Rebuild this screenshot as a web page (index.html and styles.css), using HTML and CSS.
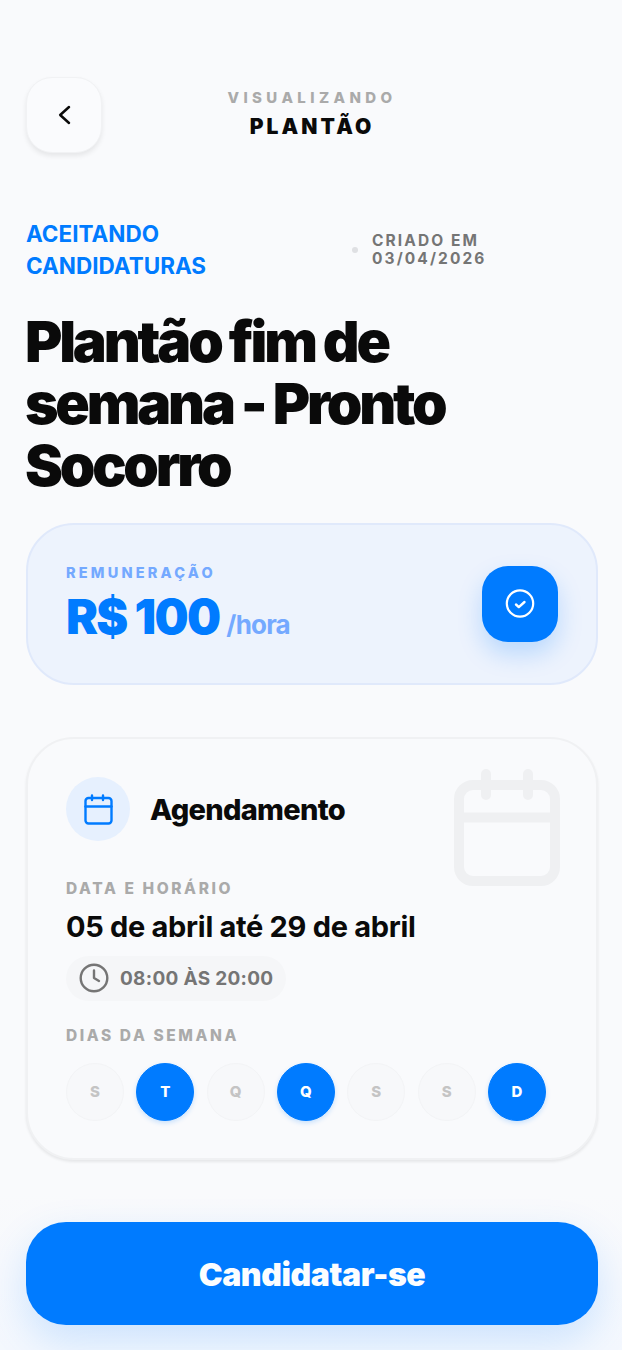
FILE: index.html
```html
<!DOCTYPE html>
<html lang="pt-BR">
<head>
<meta charset="utf-8">
<title>Plantão</title>
<link rel="stylesheet" href="styles.css">
</head>
<body>
<main class="page">
  <header class="topbar">
    <button class="back" aria-label="Voltar">
      <svg width="28" height="28" viewBox="0 0 28 28" fill="none" stroke="#0a0a0a" stroke-width="2.500" stroke-linecap="round" stroke-linejoin="round"><path d="M19 6 10.200 14 19 22"/></svg>
    </button>
    <div class="topbar-title">
      <div class="eyebrow">VISUALIZANDO</div>
      <div class="screen-name">PLANTÃO</div>
    </div>
  </header>

  <section class="status">
    <div class="status-label">ACEITANDO<br>CANDIDATURAS</div>
    <span class="dot"></span>
    <div class="created">CRIADO EM<br>03/04/2026</div>
  </section>

  <h1 class="headline">Plantão fim de semana - Pronto Socorro</h1>

  <section class="pay">
    <div>
      <div class="pay-label">REMUNERAÇÃO</div>
      <div class="pay-value"><span class="pay-amount">R$ 100</span><span class="pay-unit">/hora</span></div>
    </div>
    <div class="pay-badge">
      <svg width="32" height="32" viewBox="0 0 32 32" fill="none" stroke="#fff" stroke-linecap="round" stroke-linejoin="round"><circle cx="16" cy="15.500" r="13.200" stroke-width="2.200"/><path d="M12 16.500l2.800 2.600L20.500 14" stroke-width="2.400"/></svg>
    </div>
  </section>

  <section class="schedule">
    <svg class="watermark" width="120" height="120" viewBox="0 0 120 120" fill="none" stroke="#eff0f2" stroke-width="10" stroke-linecap="round" stroke-linejoin="round"><rect x="7" y="18" width="96" height="96" rx="14"/><path d="M7 50.500h96" stroke-linecap="butt"/><path d="M34 7v21M76 7v21"/></svg>
    <div class="schedule-head">
      <div class="schedule-icon">
        <svg width="32" height="32" viewBox="0 0 32 32" fill="none" stroke="#007bff" stroke-width="2.400" stroke-linecap="round" stroke-linejoin="round"><rect x="3.500" y="5" width="26" height="25.500" rx="3"/><path d="M3.500 13.500h26"/><path d="M10 2.500v4.500M21 2.500v4.500"/></svg>
      </div>
      <h2 class="schedule-title">Agendamento</h2>
    </div>
    <div class="field-label">DATA E HORÁRIO</div>
    <div class="dates">05 de abril até 29 de abril</div>
    <div class="time-pill">
      <svg width="30" height="30" viewBox="0 0 30 30" fill="none" stroke="#757575" stroke-width="2.400" stroke-linecap="round" stroke-linejoin="round"><circle cx="15" cy="15" r="13.300"/><path d="M15 7.500V15l5 3"/></svg>
      <span>08:00 ÀS 20:00</span>
    </div>
    <div class="field-label field-label-days">DIAS DA SEMANA</div>
    <div class="days">
      <span class="day">S</span>
      <span class="day day-on">T</span>
      <span class="day">Q</span>
      <span class="day day-on">Q</span>
      <span class="day">S</span>
      <span class="day">S</span>
      <span class="day day-on">D</span>
    </div>
  </section>
</main>
<footer class="cta-bar">
  <button class="cta">Candidatar-se</button>
</footer>
</body>
</html>
```
FILE: styles.css
```css
* { box-sizing: border-box; }
html, body { margin: 0; height: 1350px; overflow: hidden; }
body {
  background: #f9fafc;
  font-family: Inter, "Liberation Sans", sans-serif;
  color: #0a0a0a;
  position: relative;
}
.page { padding: 77px 24px 0 26px; }

.topbar { position: relative; display: flex; height: 76px; }
.back {
  width: 76px; height: 76px; padding: 0;
  border: 1px solid #f1f2f4; border-radius: 26px;
  background: #fafbfd;
  box-shadow: 0 3px 5px rgba(0,0,0,.08);
  display: flex; align-items: center; justify-content: center;
}
.topbar-title {
  position: absolute; left: 0; right: 0; top: 11px;
  text-align: center;
}
.eyebrow { font-size: 15px; line-height: 20px; font-weight: 800; letter-spacing: 4.400px; color: #aaaaaa; }
.screen-name { font-size: 21px; line-height: 38px; font-weight: 900; letter-spacing: 3.100px; }

.status { display: flex; align-items: center; margin-top: 65px; height: 64px; }
.status-label { width: 326px; font-size: 22.500px; line-height: 32px; font-weight: 700; color: #007bff; }
.dot { width: 6px; height: 6px; border-radius: 50%; background: #dfe0e3; margin: 0 14px 0 0; }
.created { font-size: 15.500px; line-height: 18px; font-weight: 700; letter-spacing: 2.100px; color: #757575; }

.headline {
  margin: 29px 0 0 -1px;
  max-width: 450px;
  font-size: 57px; line-height: 62px; font-weight: 900; letter-spacing: -3.200px;
}

.pay {
  margin-top: 26px;
  height: 162px;
  display: flex; align-items: center; justify-content: space-between;
  padding: 0 38px;
  border: 2px solid #e0e9fb; border-radius: 48px;
  background: #edf3fd;
}
.pay-label { font-size: 14.500px; line-height: 20px; font-weight: 800; letter-spacing: 3.200px; color: #74a9ff; }
.pay-value { display: flex; align-items: baseline; margin-top: 5px; }
.pay-amount { font-size: 48px; line-height: 58px; font-weight: 900; letter-spacing: -1.700px; color: #007bff; }
.pay-unit { font-size: 26px; font-weight: 700; letter-spacing: -.8px; color: #74a9ff; margin-left: 7px; }
.pay-badge {
  width: 76px; height: 76px; border-radius: 26px; background: #007bff;
  display: flex; align-items: center; justify-content: center;
  box-shadow: 0 12px 24px rgba(0,123,255,.22);
}

.schedule {
  position: relative;
  margin-top: 52px;
  height: 423px;
  padding: 38px 38px 0;
  border: 2px solid #f0f1f3; border-radius: 48px;
  background: #f9fafc;
  box-shadow: 0 2px 3px rgba(0,0,0,.08);
}
.watermark { position: absolute; left: 424px; top: 28px; }
.schedule-head { display: flex; align-items: center; gap: 20px; }
.schedule-icon {
  width: 64px; height: 64px; border-radius: 50%; background: #e6f0fe;
  display: flex; align-items: center; justify-content: center;
}
.schedule-title { margin: 0; font-size: 29px; font-weight: 800; letter-spacing: -.7px; }
.field-label { font-size: 15.500px; line-height: 20px; font-weight: 800; letter-spacing: 2.600px; color: #aaaaaa; margin-top: 38px; }
.dates { font-size: 29px; line-height: 36px; font-weight: 700; letter-spacing: -.3px; margin-top: 10px; }
.time-pill {
  display: inline-flex; align-items: center; gap: 11px;
  height: 45px; margin-top: 10.500px; padding: 0 13px;
  border-radius: 22.500px; background: #f5f6f8;
  font-size: 19px; font-weight: 700; letter-spacing: .3px; color: #757575;
}
.field-label-days { margin-top: 25px; }
.days { display: flex; gap: 12.330px; margin-top: 17px; }
.day {
  width: 58px; height: 58px; border-radius: 50%;
  display: flex; align-items: center; justify-content: center;
  background: #f7f8fa; border: 1px solid #f3f4f6;
  font-size: 15px; font-weight: 800; color: #c4c4c4;
}
.day-on { background: #007bff; border-color: #007bff; color: #fff; box-shadow: 0 2px 5px rgba(0,123,255,.2); }

.cta-bar {
  position: absolute; left: 0; right: 0; bottom: 0; height: 155px;
  padding: 27px 24px 0 26px;
  background: linear-gradient(to bottom, #f9fafc, #f4f8fe);
  overflow: hidden;
}
.cta {
  width: 572px; height: 103px; border: 0; border-radius: 40px;
  padding: 2px 0 0;
  background: #007bff; color: #fbfdff;
  font-family: inherit; font-size: 32px; font-weight: 900; letter-spacing: -.4px;
  box-shadow: 0 16px 40px rgba(0,123,255,.17);
}
```
